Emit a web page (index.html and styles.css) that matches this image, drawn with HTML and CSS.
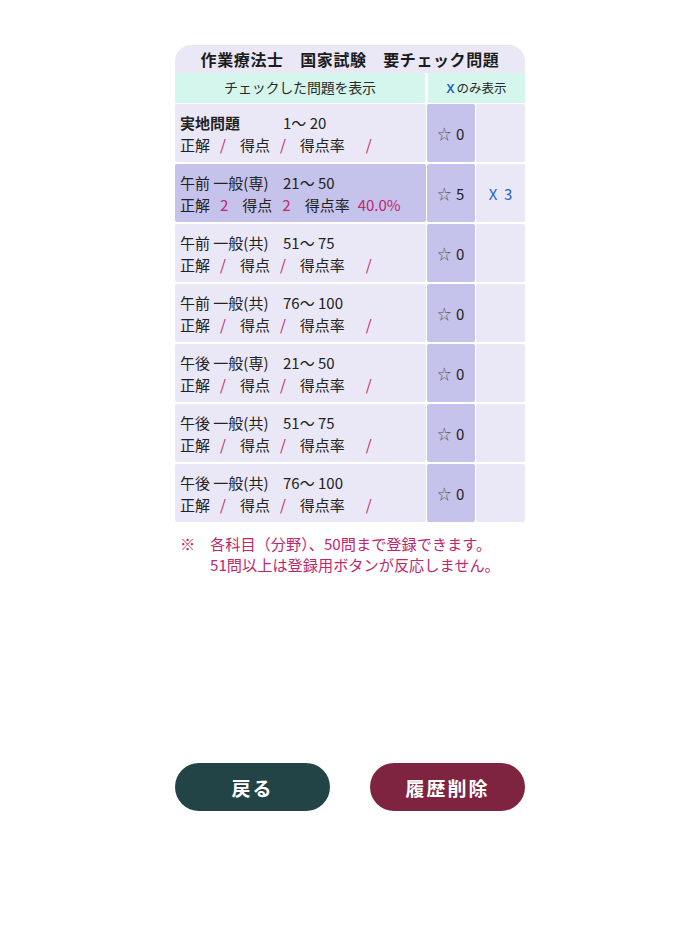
FILE: index.html
```html
<!DOCTYPE html>
<html lang="ja">
<head>
<meta charset="utf-8">
<title>要チェック問題</title>
<link rel="stylesheet" href="styles.css">
</head>
<body>
<div class="page">
  <div class="title">作業療法士　国家試験　要チェック問題</div>
  <div class="head">
    <div class="head-main">チェックした問題を表示</div>
    <div class="head-x"><span class="blue">X</span>のみ表示</div>
  </div>
  <div class="rows">
    <div class="main">
      <div class="l1"><span class="name bold">実地問題</span>1〜 20</div>
      <div class="l2">正解<span class="v">/</span>得点<span class="v">/</span>得点率<span class="r empty">/</span></div>
    </div>
    <div class="star"><span class="st">☆</span>0</div>
    <div class="xc"></div>

    <div class="main sel">
      <div class="l1"><span class="name">午前 一般(専)</span>21〜 50</div>
      <div class="l2">正解<span class="v">2</span>得点<span class="v">2</span>得点率<span class="r">40.0%</span></div>
    </div>
    <div class="star"><span class="st">☆</span>5</div>
    <div class="xc">X&nbsp; 3</div>

    <div class="main">
      <div class="l1"><span class="name">午前 一般(共)</span>51〜 75</div>
      <div class="l2">正解<span class="v">/</span>得点<span class="v">/</span>得点率<span class="r empty">/</span></div>
    </div>
    <div class="star"><span class="st">☆</span>0</div>
    <div class="xc"></div>

    <div class="main">
      <div class="l1"><span class="name">午前 一般(共)</span>76〜 100</div>
      <div class="l2">正解<span class="v">/</span>得点<span class="v">/</span>得点率<span class="r empty">/</span></div>
    </div>
    <div class="star"><span class="st">☆</span>0</div>
    <div class="xc"></div>

    <div class="main">
      <div class="l1"><span class="name">午後 一般(専)</span>21〜 50</div>
      <div class="l2">正解<span class="v">/</span>得点<span class="v">/</span>得点率<span class="r empty">/</span></div>
    </div>
    <div class="star"><span class="st">☆</span>0</div>
    <div class="xc"></div>

    <div class="main">
      <div class="l1"><span class="name">午後 一般(共)</span>51〜 75</div>
      <div class="l2">正解<span class="v">/</span>得点<span class="v">/</span>得点率<span class="r empty">/</span></div>
    </div>
    <div class="star"><span class="st">☆</span>0</div>
    <div class="xc"></div>

    <div class="main">
      <div class="l1"><span class="name">午後 一般(共)</span>76〜 100</div>
      <div class="l2">正解<span class="v">/</span>得点<span class="v">/</span>得点率<span class="r empty">/</span></div>
    </div>
    <div class="star"><span class="st">☆</span>0</div>
    <div class="xc"></div>
  </div>
  <div class="note">
    <span class="mark">※</span>
    <span class="note-text">各科目（分野）、50問まで登録できます。<br>51問以上は登録用ボタンが反応しません。</span>
  </div>
  <div class="buttons">
    <button class="btn back">戻る</button>
    <button class="btn del">履歴削除</button>
  </div>
</div>
</body>
</html>
```

FILE: styles.css
```css
* { box-sizing: border-box; }
html, body { margin: 0; padding: 0; background: #ffffff; }
body {
  font-family: "Noto Sans CJK JP", "Noto Sans", sans-serif;
  color: #222222;
}
.page {
  width: 350px;
  margin: 45px auto 0;
}
.title {
  height: 28px;
  line-height: 28px;
  background: #eae8f7;
  border-radius: 16px 16px 0 0;
  text-align: center;
  font-weight: 700;
  font-size: 16px;
  letter-spacing: 0.6px;
  color: #1c1c1c;
}
.head {
  display: grid;
  grid-template-columns: 250px 97px;
  column-gap: 3px;
  height: 29px;
  margin-bottom: 2px;
}
.head-main, .head-x {
  background: #d4f6ec;
  line-height: 29px;
  text-align: center;
  font-size: 14px;
  color: #2a2a2a;
}
.head-main { letter-spacing: -0.2px; }
.head-x { font-size: 12.5px; }
.blue { color: #1f5fc6; font-family: "Noto Sans", sans-serif; font-weight: 600; margin-right: 2px; }
.rows {
  display: grid;
  grid-template-columns: 251px 48px 49px;
  grid-auto-rows: 58px;
  column-gap: 1px;
  row-gap: 2px;
}
.main, .star, .xc {
  background: #eae8f7;
  border-radius: 2px;
}
.main {
  padding: 8px 0 0 5px;
  font-size: 15px;
  line-height: 22px;
  white-space: nowrap;
}
.main.sel { background: #c5c3eb; }
.name { display: inline-block; width: 103px; }
.bold { font-weight: 700; }
.v { color: #c0266b; margin: 0 14px 0 10px; }
.r { color: #c0266b; margin-left: 8px; }
.r.empty { margin-left: 21px; }
.star {
  background: #c5c3eb;
  display: flex;
  align-items: center;
  justify-content: center;
  font-size: 15px;
  color: #222222;
}
.st {
  font-size: 13.5px;
  color: #555555;
  margin-right: 5px;
}
.xc {
  display: flex;
  align-items: center;
  justify-content: center;
  font-size: 15px;
  color: #1f64c4;
}
.note {
  display: grid;
  grid-template-columns: 30px auto;
  margin-top: 11px;
  padding-left: 5px;
  font-size: 15.2px;
  line-height: 21px;
  color: #c0266b;
}
.buttons {
  display: flex;
  justify-content: space-between;
  margin-top: 188px;
}
.btn {
  width: 155px;
  height: 48px;
  border: none;
  border-radius: 24px;
  color: #ffffff;
  font-family: "Noto Sans CJK JP", sans-serif;
  font-weight: 700;
  font-size: 19px;
  letter-spacing: 2px;
  padding: 0;
}
.back { background: #234446; }
.del { background: #7f2440; }
```
